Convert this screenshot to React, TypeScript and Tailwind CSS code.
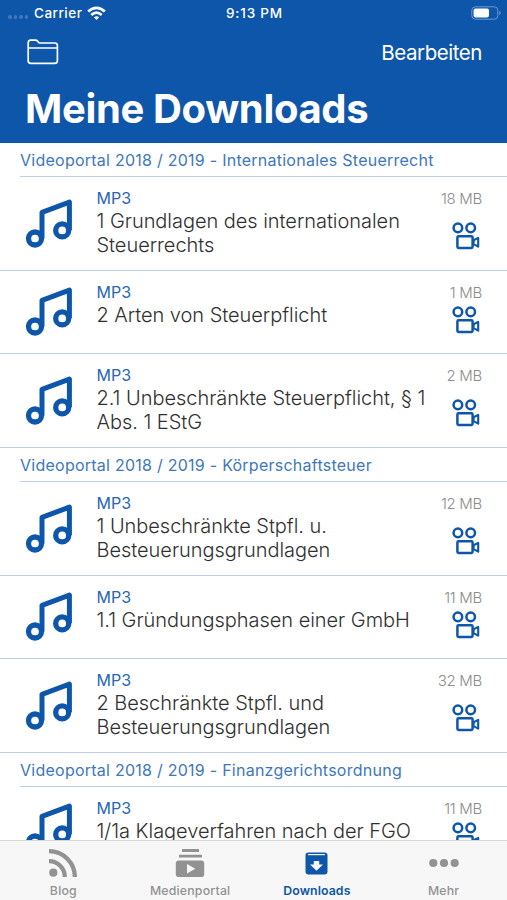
import type { ReactNode } from 'react';

type Item = { title: string[]; size: string; tall: boolean };
type Section = { name: string; items: Item[] };

const sections: Section[] = [
  {
    name: 'Videoportal 2018 / 2019 - Internationales Steuerrecht',
    items: [
      { title: ['1 Grundlagen des internationalen', 'Steuerrechts'], size: '18 MB', tall: true },
      { title: ['2 Arten von Steuerpflicht'], size: '1 MB', tall: false },
      { title: ['2.1 Unbeschränkte Steuerpflicht, § 1', 'Abs. 1 EStG'], size: '2 MB', tall: true },
    ],
  },
  {
    name: 'Videoportal 2018 / 2019 - Körperschaftsteuer',
    items: [
      { title: ['1 Unbeschränkte Stpfl. u.', 'Besteuerungsgrundlagen'], size: '12 MB', tall: true },
      { title: ['1.1 Gründungsphasen einer GmbH'], size: '11 MB', tall: false },
      { title: ['2 Beschränkte Stpfl. und', 'Besteuerungsgrundlagen'], size: '32 MB', tall: true },
    ],
  },
  {
    name: 'Videoportal 2018 / 2019 - Finanzgerichtsordnung',
    items: [{ title: ['1/1a Klageverfahren nach der FGO'], size: '11 MB', tall: false }],
  },
];

function MusicIcon() {
  return (
    <svg className="h-[50px] w-12 shrink-0" viewBox="0 0 48 50" fill="none" stroke="#0d56a9" strokeLinejoin="round">
      <path d="M17 39.5V13.3L44.4 3.1V31.3" strokeWidth="5" />
      <circle cx="10" cy="39.5" r="6.5" strokeWidth="5.3" />
      <circle cx="37.2" cy="31.4" r="6.5" strokeWidth="5.3" />
    </svg>
  );
}

function CameraIcon() {
  return (
    <svg className="h-7 w-7" viewBox="0 0 28 28" fill="none" stroke="#0d56a9" strokeWidth="2.5" strokeLinejoin="round">
      <circle cx="5.9" cy="5.9" r="4.3" />
      <circle cx="18.7" cy="5.9" r="4.3" />
      <rect x="5.4" y="14.2" width="15.2" height="11.8" rx="1.2" />
      <path d="M21.6 18.3L26.2 15.9V24.7L21.6 22.2Z" strokeWidth="2.1" />
    </svg>
  );
}

function Row({ item }: { item: Item }) {
  return (
    <li className={`flex shrink-0 border-b border-[#bccfe6] px-[25px] ${item.tall ? 'h-[94px]' : 'h-[83px]'}`}>
      <div className="flex items-center">
        <MusicIcon />
      </div>
      <div className="ml-[23.5px] flex-1 pt-[11px]">
        <p className="text-[16px] leading-[21px] text-[#2a66b3]">MP3</p>
        {item.title.map((line) => (
          <p key={line} className="text-[20px] leading-6 font-light tracking-[-0.04px] whitespace-nowrap text-[#303030]">
            {line}
          </p>
        ))}
      </div>
      <div className="flex shrink-0 flex-col items-end pt-3">
        <span className="text-[15px] leading-5 font-light tracking-[-0.3px] whitespace-nowrap text-[#8c8c8c]">{item.size}</span>
        <div className={`flex flex-1 items-center pr-[2px] ${item.tall ? 'pb-[8px]' : 'pb-[17px]'}`}>
          <CameraIcon />
        </div>
      </div>
    </li>
  );
}

function Tab({ label, active, children }: { label: string; active?: boolean; children: ReactNode }) {
  return (
    <div className={`flex flex-1 flex-col items-center pt-[6px] ${active ? 'text-[#0d56a9]' : 'text-[#929292]'}`}>
      <div className="flex h-8 items-center">{children}</div>
      <span className={`mt-1 text-[12.3px] leading-4 ${active ? 'font-semibold tracking-[0.1px]' : 'font-medium tracking-[0.2px]'}`}>
        {label}
      </span>
    </div>
  );
}

export default function App() {
  return (
    <div className="flex h-[900px] w-[507px] flex-col overflow-hidden bg-white font-[Inter,'Liberation_Sans',sans-serif]">
      <header className="h-[143px] shrink-0 bg-[#0d56a9] text-white">
        <div className="grid h-[26px] grid-cols-3 items-center pr-[6px] pl-2 text-[13.5px] font-medium">
          <div className="flex items-center">
            <div className="mt-2 flex gap-[2px]">
              {[0, 1, 2, 3].map((n) => (
                <i key={n} className="size-[3.5px] rounded-full bg-[#4379bc]" />
              ))}
            </div>
            <span className="ml-[6px] tracking-[0.5px]">Carrier</span>
            <svg className="ml-[5px] h-[15px] w-[19px]" viewBox="0 0 19 15" fill="none" stroke="white" strokeWidth="2.7">
              <path d="M1.2 5.6Q9.5-2 17.8 5.6" />
              <path d="M4.3 9Q9.5 4.2 14.7 9" />
              <path d="M9.5 14L6.8 11.3Q9.5 9 12.2 11.3Z" fill="white" stroke="none" />
            </svg>
          </div>
          <span className="text-center tracking-[0.8px]">9:13 PM</span>
          <svg className="h-[14px] w-[30px] justify-self-end" viewBox="0 0 30 14" fill="none">
            <rect x="0.8" y="0.8" width="26" height="12.4" rx="3.5" stroke="#6e99cf" />
            <rect x="2.6" y="2.6" width="15.4" height="8.8" rx="1.8" fill="white" />
            <path d="M28.3 4.8q1.4.7 1.4 2.2t-1.4 2.2z" fill="#6e99cf" />
          </svg>
        </div>
        <div className="flex h-[54px] items-center justify-between pr-[25px] pl-[27px]">
          <svg className="mb-[2px] h-[26px] w-8" viewBox="0 0 32 26" fill="none" stroke="white" strokeWidth="1.7">
            <path d="M1.2 22V3.7Q1.2 1.2 3.7 1.2H8.6Q9.8 1.2 10.6 2.2L11.2 3.1Q11.9 4 13 4H27.7Q30.4 4 30.4 6.6V21.8Q30.4 24.3 27.8 24.3H3.8Q1.2 24.3 1.2 22ZM1.2 9H30.4" />
          </svg>
          <span className="text-[20.5px] tracking-[-0.45px]">Bearbeiten</span>
        </div>
        <h1 className="pl-[25px] text-[40px] leading-[58px] font-bold tracking-[-0.35px] whitespace-nowrap">Meine Downloads</h1>
      </header>

      <main className="flex min-h-0 flex-1 flex-col overflow-hidden">
        {sections.map((s) => (
          <section key={s.name} className="shrink-0">
            <h2 className="ml-5 h-[34px] border-b border-[#bccfe6] text-[16px] leading-[34px] tracking-[0.25px] whitespace-nowrap text-[#3d77bd]">
              {s.name}
            </h2>
            <ul>
              {s.items.map((item) => (
                <Row key={item.title[0]} item={item} />
              ))}
            </ul>
          </section>
        ))}
      </main>

      <nav className="flex h-[60px] shrink-0 border-t border-[#d8d8d8] bg-[#f7f7f7]">
        <Tab label="Blog">
          <svg className="size-[30px]" viewBox="0 0 30 30" fill="none" stroke="currentColor" strokeWidth="4.3">
            <circle cx="5.3" cy="24.7" r="4.1" fill="currentColor" stroke="none" />
            <path d="M1 13.2A15.8 15.8 0 0 1 16.8 29M1 3.1A25.9 25.9 0 0 1 26.9 29" />
          </svg>
        </Tab>
        <Tab label="Medienportal">
          <svg className="size-[30px]" viewBox="0 0 30 30" fill="currentColor">
            <path d="M7 1H24V3.9H7ZM4 6.7H27V9.6H4Z" />
            <path fillRule="evenodd" d="M3.7 12.4H26.3Q29.2 12.4 29.2 15.3V26.2Q29.2 29 26.3 29H3.7Q.8 29 .8 26.2V15.3Q.8 12.4 3.7 12.4ZM12 16V25.5L20.3 20.7Z" />
          </svg>
        </Tab>
        <Tab label="Downloads" active>
          <svg className="h-[23px] w-[23px]" viewBox="0 0 23 23">
            <rect x="0.5" y="0.5" width="22" height="22" rx="3" fill="currentColor" />
            <path d="M3 2.6H20" stroke="#f7f7f7" strokeWidth="1.2" />
            <path d="M8.8 9H14.2V12.4H18L11.5 18.8L5 12.4H8.8Z" fill="#f7f7f7" />
          </svg>
        </Tab>
        <Tab label="Mehr">
          <svg className="h-[10px] w-[30px]" viewBox="0 0 30 10" fill="currentColor">
            <circle cx="4.3" cy="5" r="4.1" />
            <circle cx="15" cy="5" r="4.1" />
            <circle cx="25.7" cy="5" r="4.1" />
          </svg>
        </Tab>
      </nav>
    </div>
  );
}
